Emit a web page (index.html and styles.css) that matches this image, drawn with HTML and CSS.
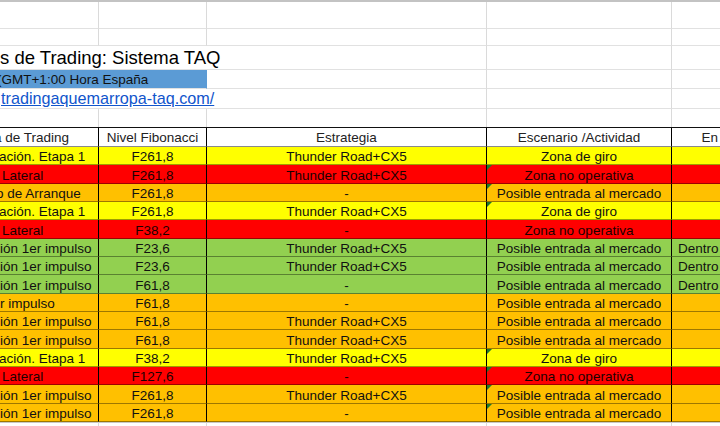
FILE: index.html
```html
<!DOCTYPE html>
<html lang="es">
<head>
<meta charset="utf-8">
<title>Escenarios de Trading: Sistema TAQ</title>
<link rel="stylesheet" href="styles.css">
</head>
<body>
<div class="sheet">
  <div class="row r1"><div class="c"></div><div class="c"></div><div class="c"></div><div class="c"></div><div class="c"></div></div>
  <div class="row r2"><div class="c"></div><div class="c"></div><div class="c"></div><div class="c"></div><div class="c"></div></div>
  <div class="row r3"><div class="c span3 title"><span class="t-title">s de Trading: Sistema TAQ</span></div><div class="c"></div><div class="c"></div></div>
  <div class="row r4"><div class="c span2 band"><span class="t-gmt">(GMT+1:00 Hora España</span></div><div class="c"></div><div class="c"></div><div class="c"></div></div>
  <div class="row r5"><div class="c span3 linkcell"><a class="t-link" href="#">tradingaquemarropa-taq.com/</a></div><div class="c"></div><div class="c"></div></div>
  <div class="row r6"><div class="c"></div><div class="c"></div><div class="c"></div><div class="c"></div><div class="c"></div></div>

  <div class="row head">
    <div class="c ca"><span class="i-h">a de Trading</span></div>
    <div class="c">Nivel Fibonacci</div>
    <div class="c">Estrategia</div>
    <div class="c">Escenario /Actividad</div>
    <div class="c">En tendencia</div>
  </div>

  <div class="row data y"><div class="c ca"><span class="i-a">ación. Etapa 1</span></div><div class="c">F261,8</div><div class="c">Thunder Road+CX5</div><div class="c">Zona de giro</div><div class="c"></div></div>
  <div class="row data rd"><div class="c ca"><span class="i-l">Lateral</span></div><div class="c">F261,8</div><div class="c">Thunder Road+CX5</div><div class="c tri">Zona no operativa</div><div class="c"></div></div>
  <div class="row data o"><div class="c ca"><span class="i-o">o de Arranque</span></div><div class="c">F261,8</div><div class="c">-</div><div class="c tri">Posible entrada al mercado</div><div class="c"></div></div>
  <div class="row data y"><div class="c ca"><span class="i-a">ación. Etapa 1</span></div><div class="c">F261,8</div><div class="c">Thunder Road+CX5</div><div class="c tri">Zona de giro</div><div class="c"></div></div>
  <div class="row data rd"><div class="c ca"><span class="i-l">Lateral</span></div><div class="c">F38,2</div><div class="c">-</div><div class="c">Zona no operativa</div><div class="c"></div></div>
  <div class="row data g"><div class="c ca"><span class="i-i">ión 1er impulso</span></div><div class="c">F23,6</div><div class="c">Thunder Road+CX5</div><div class="c">Posible entrada al mercado</div><div class="c ce">Dentro de tendencia</div></div>
  <div class="row data g"><div class="c ca"><span class="i-i">ión 1er impulso</span></div><div class="c">F23,6</div><div class="c">Thunder Road+CX5</div><div class="c">Posible entrada al mercado</div><div class="c ce">Dentro de tendencia</div></div>
  <div class="row data g"><div class="c ca"><span class="i-i">ión 1er impulso</span></div><div class="c">F61,8</div><div class="c">-</div><div class="c">Posible entrada al mercado</div><div class="c ce">Dentro de tendencia</div></div>
  <div class="row data o"><div class="c ca"><span class="i-r">r impulso</span></div><div class="c">F61,8</div><div class="c">-</div><div class="c">Posible entrada al mercado</div><div class="c"></div></div>
  <div class="row data o"><div class="c ca"><span class="i-i">ión 1er impulso</span></div><div class="c">F61,8</div><div class="c">Thunder Road+CX5</div><div class="c">Posible entrada al mercado</div><div class="c"></div></div>
  <div class="row data o"><div class="c ca"><span class="i-i">ión 1er impulso</span></div><div class="c">F61,8</div><div class="c">Thunder Road+CX5</div><div class="c">Posible entrada al mercado</div><div class="c"></div></div>
  <div class="row data y"><div class="c ca"><span class="i-a">ación. Etapa 1</span></div><div class="c">F38,2</div><div class="c">Thunder Road+CX5</div><div class="c tri">Zona de giro</div><div class="c"></div></div>
  <div class="row data rd"><div class="c ca"><span class="i-l">Lateral</span></div><div class="c">F127,6</div><div class="c">-</div><div class="c tri">Zona no operativa</div><div class="c"></div></div>
  <div class="row data o"><div class="c ca"><span class="i-i">ión 1er impulso</span></div><div class="c">F261,8</div><div class="c">Thunder Road+CX5</div><div class="c tri">Posible entrada al mercado</div><div class="c"></div></div>
  <div class="row data o"><div class="c ca"><span class="i-i">ión 1er impulso</span></div><div class="c">F261,8</div><div class="c">-</div><div class="c tri">Posible entrada al mercado</div><div class="c"></div></div>

  <div class="row tail"><div class="c"></div><div class="c"></div><div class="c"></div><div class="c"></div><div class="c"></div></div>
</div>
</body>
</html>
```

FILE: styles.css
```css
:root {
  --cols: 99px 108px 280px 185px 139px;
}

html, body {
  margin: 0;
  padding: 0;
}

body {
  width: 720px;
  height: 426px;
  overflow: hidden;
  background: #ffffff;
  font-family: "Liberation Sans", Arial, sans-serif;
  color: #000;
}

.sheet {
  border-top: 2px solid #c3c3c3;
}

.row {
  display: grid;
  grid-template-columns: var(--cols);
}

.c {
  box-sizing: border-box;
  border-right: 1px solid #dadada;
  border-bottom: 1px solid #e1e1e1;
  overflow: hidden;
  white-space: nowrap;
  display: flex;
  align-items: flex-end;
}

.span2 { grid-column: span 2; }
.span3 { grid-column: span 3; }

.r1 { height: 27px; }
.r2 { height: 17px; }
.r3 { height: 24px; }
.r4 { height: 19px; }
.r5 { height: 20px; }
.r6 { height: 18px; }
.r6 .c { border-bottom: none; }

.title {
  font-size: 18.5px;
  padding-bottom: 0;
}
.t-title { margin-left: 0; }

.band {
  background: #5b9bd5;
  font-size: 13.5px;
  padding-bottom: 1px;
  border-right-color: #5b9bd5;
}
.t-gmt { margin-left: -3px; color: #111; }

.linkcell {
  font-size: 16.2px;
}
.t-link {
  color: #1155cc;
  text-decoration: underline;
  margin-left: 1px;
}

/* table header */
.head {
  height: 19px;
  border-top: 1px solid #111;
  box-sizing: content-box;
}
.head .c {
  height: 19px;
  background: #fff;
  border-right: 1px solid #000;
  border-bottom: 1px solid #8a8a8a;
  font-size: 13.5px;
  color: #222;
  justify-content: center;
  padding-bottom: 1px;
}
.head .c.ca { justify-content: flex-start; }

/* data rows */
.data { height: 18.333px; }
.data .c {
  height: 18.333px;
  border-right: 1px solid #000;
  border-bottom: 1px solid rgba(0, 0, 0, 0.38);
  font-size: 13.5px;
  color: #111;
  justify-content: center;
}
.data .c.ca { justify-content: flex-start; }
.data .c.ce { justify-content: flex-start; padding-left: 6px; }

.y .c { background: #ffff00; }
.rd .c { background: #ff0000; color: #1a0000; }
.o .c { background: #ffc000; }
.g .c { background: #92d050; }

.i-h { margin-left: -6px; }
.i-a { margin-left: -1px; }
.i-l { margin-left: 2px; }
.i-o { margin-left: -4px; }
.i-i { margin-left: 0; }
.i-r { margin-left: 0; }

.tri { position: relative; }
.tri::before {
  content: "";
  position: absolute;
  left: 0;
  top: 0;
  border-top: 5px solid #1f7a2a;
  border-right: 5px solid transparent;
}

.tail { height: 12px; }
.tail .c {
  border-top: 1px solid #c8c8c8;
  border-bottom: none;
}
```
